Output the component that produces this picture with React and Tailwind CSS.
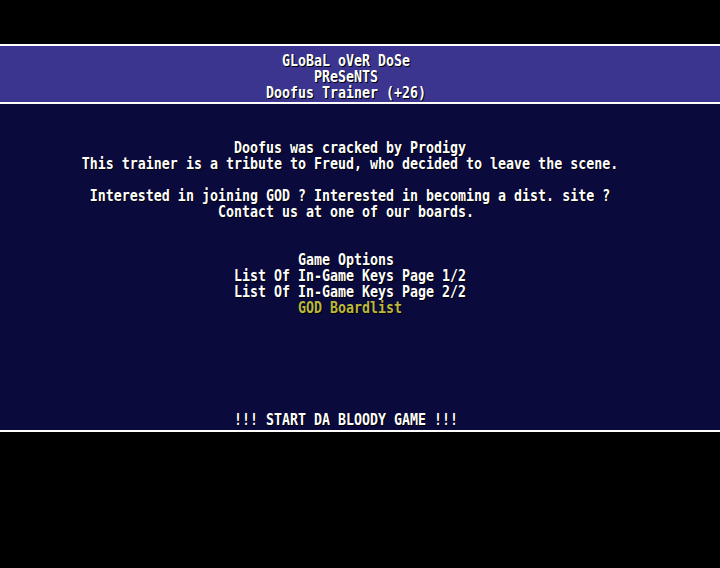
const header = ["GLoBaL oVeR DoSe", "PReSeNTS", "Doofus Trainer (+26)"];

// char-grid screen: even-length lines get a trailing space so they sit on the grid
const body = [
  { t: "Doofus was cracked by Prodigy" },
  { t: "This trainer is a tribute to Freud, who decided to leave the scene." },
  { t: "" },
  { t: "Interested in joining GOD ? Interested in becoming a dist. site ?" },
  { t: "Contact us at one of our boards. " },
  { t: "" },
  { t: "" },
  { t: "Game Options " },
  { t: "List Of In-Game Keys Page 1/2" },
  { t: "List Of In-Game Keys Page 2/2" },
  { t: "GOD Boardlist", gold: true },
  { t: "" },
  { t: "" },
  { t: "" },
  { t: "" },
  { t: "" },
  { t: "" },
  { t: "!!! START DA BLOODY GAME !!! " },
];

function Line({ children, gold }) {
  return (
    <div
      className={
        "h-4 leading-4 whitespace-pre text-center text-[13.3px] font-bold translate-y-px scale-y-[1.15] [text-shadow:1px_1px_0_#000] " +
        (gold ? "text-[#bcb83c]" : "text-white")
      }
    >
      {children || " "}
    </div>
  );
}

export default function App() {
  return (
    <div
      className="w-[720px] h-[568px] bg-black flex flex-col"
      style={{ fontFamily: '"DejaVu Sans Mono", "Liberation Mono", monospace' }}
    >
      <div className="h-[44px]" />
      <div className="border-y-2 border-white bg-[#3b358f] pt-[6px] pb-[2px]">
        <div className="w-[640px] ml-[30px]">
          {header.map((h) => (
            <Line key={h}>{h + " "}</Line>
          ))}
        </div>
      </div>
      <div className="bg-[#0b0a3c] border-b-2 border-white pt-[35px] pb-[3px]">
        <div className="w-[640px] ml-[30px]">
          {body.map((l, i) => (
            <Line key={i} gold={l.gold}>
              {l.t}
            </Line>
          ))}
        </div>
      </div>
    </div>
  );
}
